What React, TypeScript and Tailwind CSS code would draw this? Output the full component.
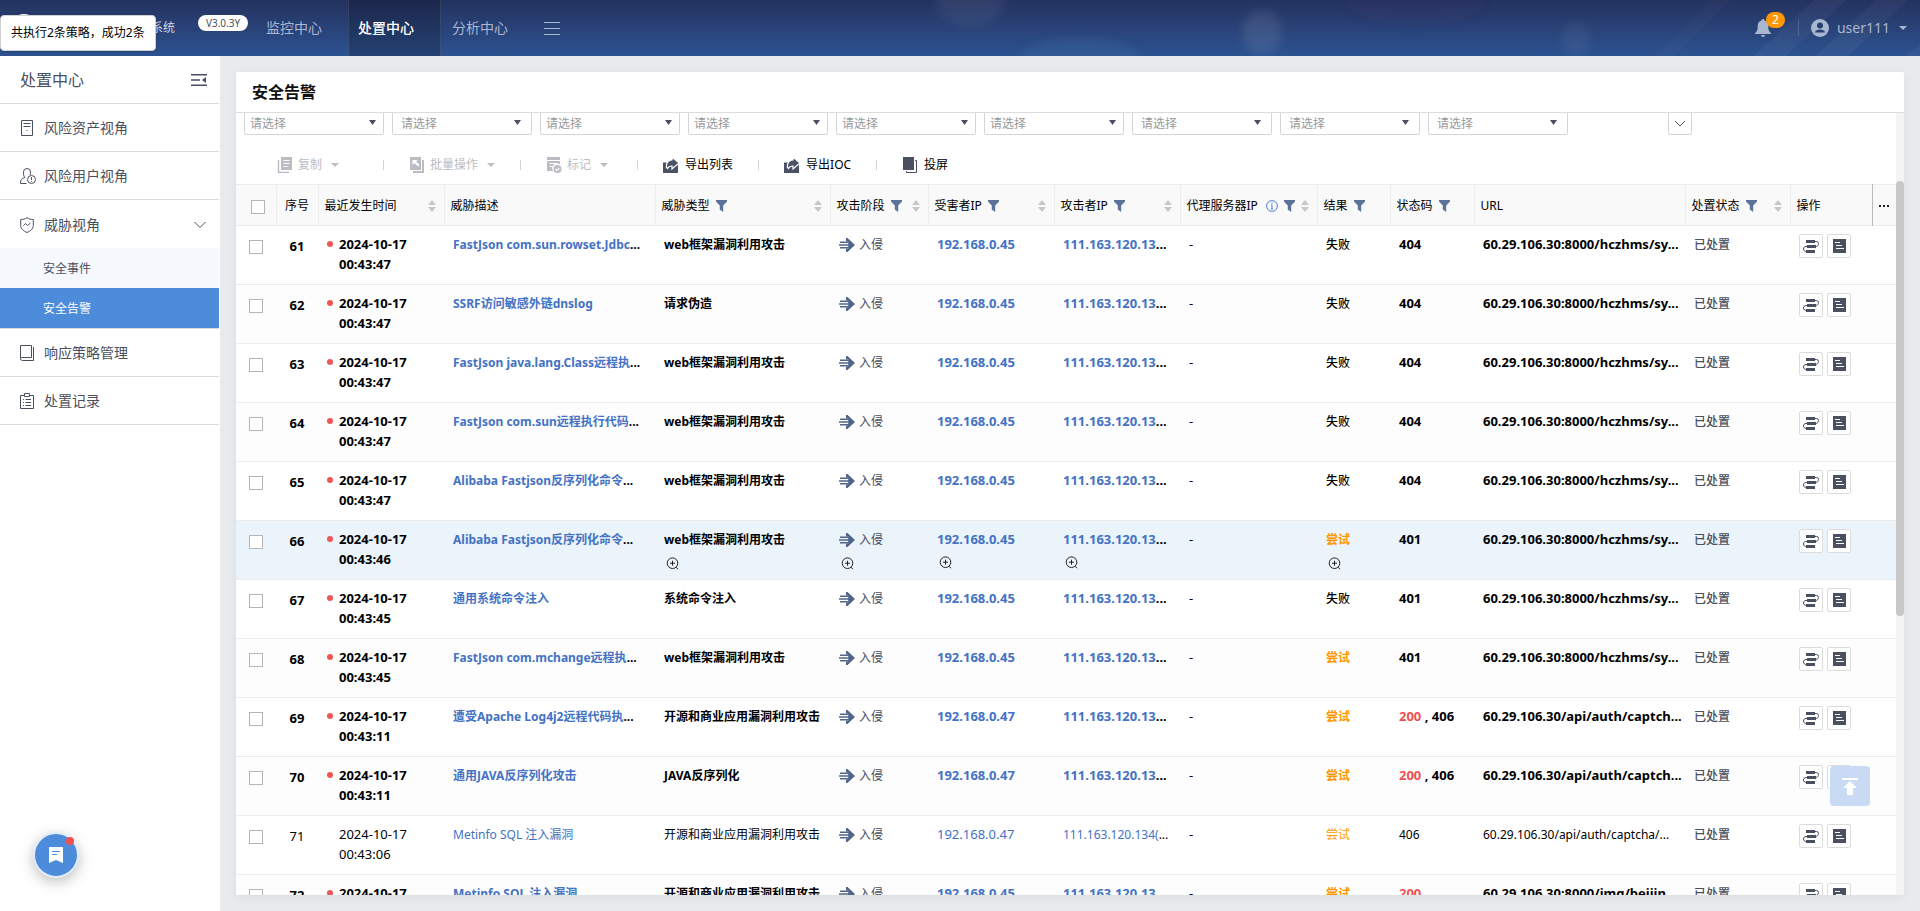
import type { ReactNode } from 'react';

type Part = [text: string, className?: string];

interface Alert {
  id: number;
  time: string;
  read?: boolean;
  hover?: boolean;
  threat: string;
  cut?: boolean;
  type: string;
  victim: string;
  attacker: string;
  result: '失败' | '尝试';
  codes: Part[];
  url: string;
}

const WEB = 'web框架漏洞利用攻击';
const OSS = '开源和商业应用漏洞利用攻击';
const HMS = '60.29.106.30:8000/hczhms/sy...';
const CAPTCHA = '60.29.106.30/api/auth/captch...';

const alerts: Alert[] = [
  { id: 61, time: '00:43:47', threat: 'FastJson com.sun.rowset.Jdbc', cut: true, type: WEB, victim: '192.168.0.45', attacker: '111.163.120.13', result: '失败', codes: [['404']], url: HMS },
  { id: 62, time: '00:43:47', threat: 'SSRF访问敏感外链dnslog', type: '请求伪造', victim: '192.168.0.45', attacker: '111.163.120.13', result: '失败', codes: [['404']], url: HMS },
  { id: 63, time: '00:43:47', threat: 'FastJson java.lang.Class远程执', cut: true, type: WEB, victim: '192.168.0.45', attacker: '111.163.120.13', result: '失败', codes: [['404']], url: HMS },
  { id: 64, time: '00:43:47', threat: 'FastJson com.sun远程执行代码', cut: true, type: WEB, victim: '192.168.0.45', attacker: '111.163.120.13', result: '失败', codes: [['404']], url: HMS },
  { id: 65, time: '00:43:47', threat: 'Alibaba Fastjson反序列化命令', cut: true, type: WEB, victim: '192.168.0.45', attacker: '111.163.120.13', result: '失败', codes: [['404']], url: HMS },
  { id: 66, time: '00:43:46', hover: true, threat: 'Alibaba Fastjson反序列化命令', cut: true, type: WEB, victim: '192.168.0.45', attacker: '111.163.120.13', result: '尝试', codes: [['401']], url: HMS },
  { id: 67, time: '00:43:45', threat: '通用系统命令注入', type: '系统命令注入', victim: '192.168.0.45', attacker: '111.163.120.13', result: '失败', codes: [['401']], url: HMS },
  { id: 68, time: '00:43:45', threat: 'FastJson com.mchange远程执', cut: true, type: WEB, victim: '192.168.0.45', attacker: '111.163.120.13', result: '尝试', codes: [['401']], url: HMS },
  { id: 69, time: '00:43:11', threat: '遭受Apache Log4j2远程代码执', cut: true, type: OSS, victim: '192.168.0.47', attacker: '111.163.120.13', result: '尝试', codes: [['200', 'text-[#f05050]'], [' , 406']], url: CAPTCHA },
  { id: 70, time: '00:43:11', threat: '通用JAVA反序列化攻击', type: 'JAVA反序列化', victim: '192.168.0.47', attacker: '111.163.120.13', result: '尝试', codes: [['200', 'text-[#f05050]'], [' , 406']], url: CAPTCHA },
  { id: 71, time: '00:43:06', read: true, threat: 'Metinfo SQL 注入漏洞', type: OSS, victim: '192.168.0.47', attacker: '111.163.120.134(', result: '尝试', codes: [['406']], url: '60.29.106.30/api/auth/captcha/...' },
  { id: 72, time: '00:43:06', threat: 'Metinfo SQL 注入漏洞', type: OSS, victim: '192.168.0.45', attacker: '111.163.120.13', result: '尝试', codes: [['200', 'text-[#f05050]']], url: '60.29.106.30:8000/img/beijin...' },
];

const Caret = ({ className }: { className: string }) => (
  <svg viewBox="0 0 8 4" className={`h-1 w-2 shrink-0 ${className}`} fill="currentColor">
    <path d="M0 0h8L4 4z" />
  </svg>
);

const Funnel = () => (
  <svg viewBox="0 0 11 12" className="h-3 w-[11px] shrink-0 text-[#5b7399]" fill="currentColor">
    <path d="M0 0h11v1.6L7.2 5.6V12L3.8 9.6v-4L0 1.6z" />
  </svg>
);

const Sorter = () => (
  <svg viewBox="0 0 8 12" className="ml-auto h-3 w-2 shrink-0 text-[#c8c8c8]" fill="currentColor">
    <path d="M4 0l4 5H0zM0 7h8l-4 5z" />
  </svg>
);

const Info = () => (
  <svg viewBox="0 0 12 12" className="ml-[2px] h-3 w-3 shrink-0 text-[#4a80d8]" fill="none" stroke="currentColor">
    <circle cx="6" cy="6" r="5.4" />
    <path d="M6 5v4M5 9h2M5.2 5H6M6 2.6v1.2" />
  </svg>
);

const Magnify = () => (
  <svg viewBox="0 0 13 13" className="h-[13px] w-[13px] text-[#222]" fill="none" stroke="currentColor">
    <circle cx="6.5" cy="6.2" r="5.3" />
    <path d="M4 6.2h5M6.5 3.7v5M10 10.2l2 2" />
  </svg>
);

const StageIcon = () => (
  <svg viewBox="0 0 16 14" className="h-[14px] w-4 shrink-0 text-[#50658a]" fill="currentColor">
    <path d="M7 0h1.5L16 7l-7.5 7H7v-3.500h2.500V3.500H7z" />
    <path d="M1 3.500h9V5H1zM0 6.300h12v1.400H0zM1 9h9v1.500H1z" />
    <path d="M9.500 4h2l2 3-2 3h-2z" />
  </svg>
);

const iconClass = 'h-4 w-4 shrink-0';

const CopyIcon = () => (
  <svg viewBox="0 0 16 16" className={iconClass} fill="currentColor">
    <path d="M4 0h11v13H4z" />
    <path d="M1.500 3v12.500H12" fill="none" stroke="currentColor" strokeWidth="1.400" />
    <path d="M6.500 3.500h6M6.500 6.500h6M6.500 9.500h4" stroke="#fff" strokeWidth="1.200" />
  </svg>
);

const BatchIcon = () => (
  <svg viewBox="0 0 16 16" className={iconClass} fill="currentColor">
    <path d="M1 0h11v13H1z" />
    <path d="M14 3v12H4" fill="none" stroke="currentColor" strokeWidth="2" />
    <path d="M3.500 3h5L7.200 4.500 10.500 8 9 9.500 5.500 6 3.500 8z" fill="#fff" />
  </svg>
);

const MarkIcon = () => (
  <svg viewBox="0 0 16 16" className={iconClass} fill="currentColor">
    <path d="M1 0h13v7.200A5 5 0 0 0 7 14H1z" />
    <path d="M1 3.500h13M3.500 6.500h7M3.500 9.500h3" stroke="#fff" strokeWidth="1.200" />
    <circle cx="11.500" cy="12" r="4" />
    <path d="M9.600 12l1.400 1.400 2.400-2.600" fill="none" stroke="#fff" strokeWidth="1.100" />
  </svg>
);

const ExportIcon = () => (
  <svg viewBox="0 0 16 16" className={`${iconClass} text-[#4a5366]`} fill="currentColor">
    <path d="M0 5.500h15V16H0z" />
    <path d="M3.500 10.500C3 6 5 3 9 2.800V0l7 6-7 6V9C7 9 5.500 9.500 4.500 11.500z" stroke="#fff" strokeWidth="1.200" />
    <path d="M13 0h3v4.500zM0 0h6L3 4H0z" fill="#fff" />
  </svg>
);

const ScreenIcon = () => (
  <svg viewBox="0 0 16 16" className={`${iconClass} text-[#4a5060]`} fill="currentColor">
    <path d="M1 0h11v13H1z" />
    <path d="M13 3.500h1.500v12H4.500V14" fill="none" stroke="currentColor" />
  </svg>
);

const FlowIcon = () => (
  <svg viewBox="0 0 16 13" className="h-[13px] w-4" fill="currentColor">
    <path d="M3 0h9v3H3zM4 5h9v3H4zM3 10h9v3H3z" />
    <path d="M12 1.500h1.500a2 2 0 0 1 2 2c0 1.500-1 3-3 3M4 6.500H3c-1.500 0-2.500 1-2.500 2.500s1 2.500 3 2.500" fill="none" stroke="currentColor" />
  </svg>
);

const DetailIcon = () => (
  <svg viewBox="0 0 13 14" className="h-[14px] w-[13px]" fill="currentColor">
    <path d="M0 0h13v14H0z" />
    <path d="M2 3.500h5M3 6.500h6M3 9.500h8" stroke="#fff" />
  </svg>
);

const sideIcon = 'h-4 w-[14px] shrink-0';

const AssetIcon = () => (
  <svg viewBox="0 0 14 16" className={sideIcon} fill="none" stroke="currentColor">
    <path d="M1.500.5h11v15h-11zM3.500 3.500h7M3.500 6.500h7M6.500 10.500h1" />
  </svg>
);

const UserRiskIcon = () => (
  <svg viewBox="0 0 16 16" className="-mr-[2px] h-4 w-4 shrink-0" fill="none" stroke="currentColor">
    <path d="M6.500 15.500h-6c0-4 1.500-5 4.500-6C3.500 8 3.500 6.500 3.500 4a3.500 3.500 0 0 1 7 0c0 1 0 2-.5 3" />
    <circle cx="11.500" cy="11.500" r="4" />
    <path d="M11.500 9v3M11.500 13v1" />
  </svg>
);

const ShieldIcon = () => (
  <svg viewBox="0 0 14 16" className={sideIcon} fill="none" stroke="currentColor">
    <path d="M7 .7c2 1.300 4 1.800 6.300 1.800v6c0 3.500-3 5.500-6.300 7C3.700 14 .7 12 .7 8.500v-6C3 2.500 5 2 7 .7z" />
    <path d="M3.500 8.500l2-2L7.500 8.500l3-2.500" />
  </svg>
);

const BookIcon = () => (
  <svg viewBox="0 0 14 16" className={sideIcon} fill="none" stroke="currentColor">
    <path d="M11.500 12.500V.5h-11v13a2 2 0 0 0 2 2h11V2M.5 13.500a1 1 0 0 1 1-1h10" />
  </svg>
);

const RecordIcon = () => (
  <svg viewBox="0 0 14 16" className={sideIcon} fill="none" stroke="currentColor">
    <path d="M4 2.500H.5v13h13v-13H10M4.500.5h5v3h-5zM3 6.500h1M5.500 6.500h5.500M3 9.500h1M5.500 9.500h5.500M3 12.500h1M5.500 12.500h5.500" />
  </svg>
);

const Backdrop = () => (
  <svg className="absolute inset-0 h-full w-full" preserveAspectRatio="xMidYMid slice" viewBox="0 0 1920 56">
    <defs>
      <filter id="soft"><feGaussianBlur stdDeviation="5" /></filter>
    </defs>
    <g filter="url(#soft)">
      <ellipse cx="1262" cy="32" rx="20" ry="22" fill="#fff" opacity=".09" />
      <ellipse cx="1576" cy="38" rx="15" ry="16" fill="#fff" opacity=".05" />
      <ellipse cx="970" cy="0" rx="34" ry="26" fill="#fff" opacity=".06" />
      <ellipse cx="1080" cy="62" rx="60" ry="26" fill="#6fa0c0" opacity=".1" />
      <ellipse cx="1415" cy="0" rx="70" ry="26" fill="#4a2a60" opacity=".12" />
    </g>
    <path d="M1786 56l60-56h-32l-60 56zM1848 56l60-56h-32l-60 56zM1906 56l14-12v12z" fill="#fff" opacity=".04" />
    <path d="M1674 56l56-56h-18l-56 56z" fill="#fff" opacity=".02" />
  </svg>
);

const TopBar = () => (
  <header className="relative flex h-14 shrink-0 items-center bg-linear-to-b from-[#24325f] to-[#2c5391] text-sm text-[#a9b7d1]">
    <Backdrop />
    <div className="relative flex h-full w-[175px] shrink-0 items-center justify-between pl-[10px] text-xs text-[#cfd8e8]">
      <span className="h-7 w-7 rounded-full bg-white" />
      <span>系统</span>
    </div>
    <span className="relative mb-[10px] ml-[23px] flex h-4 w-[50px] items-center justify-center rounded-full bg-white text-[10px] text-[#4a5060]">V3.0.3Y</span>
    <nav className="relative flex h-full items-stretch">
      <a href="#monitor" className="mr-[26px] ml-[18px] flex items-center">监控中心</a>
      <a href="#dispose" className="flex w-[93px] items-center border-x border-white/10 bg-black/20 pl-[9px] font-medium text-white">处置中心</a>
      <a href="#analyse" className="ml-[11px] flex items-center">分析中心</a>
    </nav>
    <button aria-label="更多" className="relative ml-9">
      <svg viewBox="0 0 16 13" className="h-[13px] w-4" stroke="currentColor"><path d="M0 .5h16M0 6.500h16M0 12.500h16" /></svg>
    </button>
    <div className="relative ml-auto flex items-center pr-[13px]">
      <button aria-label="通知" className="relative mr-[27px]">
        <svg viewBox="0 0 16 18" className="h-[18px] w-4" fill="currentColor">
          <path d="M8 0c1 0 1.500.6 1.500 1.500C12 2.200 13.300 4.400 13.300 7c0 4 .7 5.500 2.700 7v1H0v-1c2-1.500 2.700-3 2.700-7 0-2.600 1.300-4.800 3.800-5.500C6.500.6 7 0 8 0zM6 16h4a2 2 0 0 1-4 0z" />
        </svg>
        <span className="absolute -top-[7px] left-[11px] flex h-4 w-[19px] items-center justify-center rounded-full bg-[#ff9800] text-xs text-white">2</span>
      </button>
      <span className="mr-3 h-4 w-px bg-white/15" />
      <button className="flex items-center">
        <svg viewBox="0 0 18 18" className="mr-2 h-[18px] w-[18px]" fill="currentColor">
          <circle cx="9" cy="9" r="9" />
          <circle cx="9" cy="6.500" r="3" fill="#27406f" />
          <path d="M3.800 13.500c.8-2.200 3-3 5.200-3s4.400.8 5.200 3z" fill="#27406f" />
        </svg>
        user111
        <Caret className="ml-[9px]" />
      </button>
    </div>
  </header>
);

const SideItem = ({ icon, label, arrow }: { icon: ReactNode; label: string; arrow?: boolean }) => (
  <a href="#menu" className={`flex h-12 items-center gap-[10px] pt-px pr-[13px] pl-5 text-sm ${arrow ? '' : 'border-b border-[#dcdcdc]'}`}>
    {icon}
    {label}
    {arrow && (
      <svg viewBox="0 0 12 8" className="ml-auto h-2 w-3" fill="none" stroke="currentColor"><path d="M.5 1L6 6.500 11.500 1" /></svg>
    )}
  </a>
);

const Sidebar = () => (
  <aside className="relative w-[220px] shrink-0 border-r border-white bg-white text-[#4a5060]">
    <div className="flex h-12 items-center justify-between border-b border-[#dcdcdc] pr-3 pl-5">
      <h2 className="text-base">处置中心</h2>
      <button aria-label="收起菜单">
        <svg viewBox="0 0 16 14" className="h-[14px] w-4" fill="currentColor">
          <path d="M0 1h16v1.400H0zM0 6.300h9v1.400H0zM0 11.600h16V13H0zM15 4v6l-4-3z" />
        </svg>
      </button>
    </div>
    <nav>
      <SideItem icon={<AssetIcon />} label="风险资产视角" />
      <SideItem icon={<UserRiskIcon />} label="风险用户视角" />
      <SideItem icon={<ShieldIcon />} label="威胁视角" arrow />
      <div className="border-b border-[#dcdcdc] text-xs">
        <a href="#events" className="flex h-10 items-center bg-[#f5f9fe] pt-[2px] pl-[43px]">安全事件</a>
        <a href="#alerts" className="flex h-10 items-center bg-[#4c8cda] pt-[2px] pl-[43px] text-white">安全告警</a>
      </div>
      <SideItem icon={<BookIcon />} label="响应策略管理" />
      <SideItem icon={<RecordIcon />} label="处置记录" />
    </nav>
    <button aria-label="书签" className="absolute bottom-[33px] left-[33px] flex h-[46px] w-[46px] items-center justify-center rounded-full border-2 border-[#e3edf9] bg-[#4c8cda] shadow-[0_4px_14px_rgba(0,0,0,0.25)]">
      <svg viewBox="0 0 14 16" className="h-4 w-[14px]">
        <path d="M0 0h14v16l-7-3-7 3z" fill="#fff" />
        <path d="M3 4.500h8M3 7.500h5" stroke="#4c8cda" />
      </svg>
      <span className="absolute top-[3px] right-[3px] h-2 w-2 rounded-full bg-[#f05050]" />
    </button>
  </aside>
);

// wide ones have the larger inner padding
const filters = [false, true, false, false, false, false, true, true, true];

const Filters = () => (
  <div className="-mt-0.5 flex gap-2 pl-2 text-xs text-[#999]">
    {filters.map((wide, i) => (
      <div key={i} className={`flex h-6 w-[140px] items-center rounded-xs border border-[#d5d5d5] pt-px ${wide ? 'pr-[10px] pl-2' : 'pr-[7px] pl-[5px]'}`}>
        <select aria-label={`筛选条件${i + 1}`} className="min-w-0 flex-1 appearance-none bg-transparent outline-none">
          <option>请选择</option>
        </select>
        <svg viewBox="0 0 7 5" className="mb-[3px] h-[5px] w-[7px] shrink-0 text-[#4a5060]" fill="currentColor"><path d="M0 0h7L3.500 5z" /></svg>
      </div>
    ))}
    <button aria-label="展开筛选" className="ml-[92px] flex h-6 w-6 items-center justify-center rounded-xs border border-[#d5d5d5]">
      <svg viewBox="0 0 12 7" className="h-[7px] w-3 text-[#555]" fill="none" stroke="currentColor"><path d="M1 1l5 5 5-5" /></svg>
    </button>
  </div>
);

const Separator = () => <span className="mx-[25px] h-[10px] w-px bg-[#d5d5d5]" />;

const Tool = ({ icon, label, menu }: { icon: ReactNode; label: string; menu?: boolean }) => (
  <button className={`flex items-center ${menu ? 'gap-[5px] text-[#bbbdc3]' : 'gap-[6px] text-black'}`}>
    {icon}
    {label}
    {menu && <Caret className="ml-1" />}
  </button>
);

const Toolbar = () => (
  <div className="flex h-[49px] items-center pt-[10px] pl-[41px] text-xs">
    <Tool icon={<CopyIcon />} label="复制" menu />
    <span className="w-[19px]" />
    <Separator />
    <Tool icon={<BatchIcon />} label="批量操作" menu />
    <Separator />
    <Tool icon={<MarkIcon />} label="标记" menu />
    <span className="w-1" />
    <Separator />
    <Tool icon={<ExportIcon />} label="导出列表" />
    <Separator />
    <Tool icon={<ExportIcon />} label="导出IOC" />
    <Separator />
    <Tool icon={<ScreenIcon />} label="投屏" />
  </div>
);

interface HeadProps {
  label: string;
  info?: boolean;
  filter?: boolean;
  sort?: boolean;
}

const heads: HeadProps[] = [
  { label: '最近发生时间', sort: true },
  { label: '威胁描述' },
  { label: '威胁类型', filter: true, sort: true },
  { label: '攻击阶段', filter: true, sort: true },
  { label: '受害者IP', filter: true, sort: true },
  { label: '攻击者IP', filter: true, sort: true },
  { label: '代理服务器IP', info: true, filter: true, sort: true },
  { label: '结果', filter: true },
  { label: '状态码', filter: true },
  { label: 'URL' },
  { label: '处置状态', filter: true, sort: true },
  { label: '操作' },
];

const Head = ({ label, info, filter, sort }: HeadProps) => (
  <th className="border-r border-[#ececec] pt-px pr-2 pl-[6px] font-normal nth-last-2:border-[#bbb]">
    <div className="flex items-center gap-[6px] whitespace-nowrap">
      {label}
      {info && <Info />}
      {filter && <Funnel />}
      {sort && <Sorter />}
    </div>
  </th>
);

const Check = ({ label }: { label: string }) => (
  <input type="checkbox" aria-label={label} className="block h-[14px] w-[14px] appearance-none border border-[#b5b5b5] bg-white" />
);

const Cell = ({ zoom, className = 'pt-[9px]', children }: { zoom?: boolean; className?: string; children: ReactNode }) => (
  <td className={`pl-[9px] ${className}`}>
    <div className="h-5">{children}</div>
    {zoom && <div className="pt-[7px] pl-[2px]"><Magnify /></div>}
  </td>
);

const opButton = 'flex h-6 w-6 items-center justify-center rounded-xs border border-[#dcdcdc] bg-white text-[#4a5060]';

const Row = ({ a }: { a: Alert }) => (
  <tr className={`h-[59px] border-b border-[#ececec] align-top whitespace-nowrap ${a.hover ? 'bg-[#ebf3fb]' : 'odd:bg-white even:bg-[#fdfdfd]'} ${a.read ? '' : 'font-bold'}`}>
    <td className="pt-[14px] pl-[13px]"><Check label={`选择 ${a.id}`} /></td>
    <td className="pt-[10px] text-center text-[13px]">{a.id}</td>
    <td className="pt-2 pl-[9px] text-[13px]">
      <div className="flex gap-[6px]">
        <span className={`mt-[7px] h-[6px] w-[6px] rounded-full ${a.read ? '' : 'bg-[#f05656]'}`} />
        <span>2024-10-17<br />{a.time}</span>
      </div>
    </td>
    <Cell>
      <a href="#detail" className="text-[#4472c4]">{a.threat}</a>
      {a.cut && '...'}
    </Cell>
    <Cell zoom={a.hover}>{a.type}</Cell>
    <Cell zoom={a.hover} className="pt-[9px] font-normal text-[#4a5060]">
      <span className="flex items-center gap-1"><StageIcon />入侵</span>
    </Cell>
    <Cell zoom={a.hover} className="pt-2 text-[13px]"><a href="#victim" className="text-[#4472c4]">{a.victim}</a></Cell>
    <Cell zoom={a.hover} className={a.read ? 'pt-[9px]' : 'pt-2 text-[13px]'}><a href="#attacker" className="text-[#4472c4]">{a.attacker}</a>...</Cell>
    <Cell className="pt-2 text-[13px] font-normal">-</Cell>
    <Cell zoom={a.hover} className={a.result === '尝试' ? 'pt-[9px] text-[#ff9800]' : 'pt-[9px] font-medium'}>{a.result}</Cell>
    <Cell className={a.read ? 'pt-[9px]' : 'pt-2 text-[13px]'}>{a.codes.map(([text, color]) => <span key={text} className={color}>{text}</span>)}</Cell>
    <Cell className={a.read ? 'pt-[9px]' : 'pt-2 text-[13px]'}>{a.url}</Cell>
    <Cell className="pt-[9px] font-medium text-[#4a5060]">已处置</Cell>
    <td className="pt-2 pl-[9px]">
      <div className="flex gap-1">
        <button aria-label="处置流程" className={opButton}><FlowIcon /></button>
        <button aria-label="详情" className={opButton}><DetailIcon /></button>
      </div>
    </td>
    <td />
  </tr>
);

const AlertTable = () => (
  <table className="w-full table-fixed border-collapse text-left text-xs leading-5 text-black">
    <colgroup>
      <col className="w-[40px]" />
      <col className="w-[42px]" />
      <col className="w-[126px]" />
      <col className="w-[211px]" />
      <col className="w-[175px]" />
      <col className="w-[98px]" />
      <col className="w-[126px]" />
      <col className="w-[126px]" />
      <col className="w-[137px]" />
      <col className="w-[73px]" />
      <col className="w-[84px]" />
      <col className="w-[211px]" />
      <col className="w-[105px]" />
      <col className="w-[82px]" />
      <col className="w-[24px]" />
    </colgroup>
    <thead>
      <tr className="h-[41px] border-y border-[#ececec] bg-[#f9f9f9]">
        <th className="border-r border-[#ececec] pt-1 pl-[15px]"><Check label="全选" /></th>
        <th className="border-r border-[#ececec] pt-px text-center font-normal">序号</th>
        {heads.map((h) => <Head key={h.label} {...h} />)}
        <th className="text-center">
          <button aria-label="列设置" className="inline-flex gap-[2px] align-middle">
            <i className="h-[2px] w-[2px] bg-[#222]" />
            <i className="h-[2px] w-[2px] bg-[#222]" />
            <i className="h-[2px] w-[2px] bg-[#222]" />
          </button>
        </th>
      </tr>
    </thead>
    <tbody>
      {alerts.map((a) => <Row key={a.id} a={a} />)}
    </tbody>
  </table>
);

const Scrollbar = () => (
  <div className="flex w-2 shrink-0 flex-col bg-[#f4f4f4]">
    <span className="flex-[68]" />
    <span className="flex-[435] rounded-full bg-[#c8c8c8]" />
    <span className="flex-[279]" />
  </div>
);

export default function App() {
  return (
    <div className="relative flex h-screen flex-col overflow-hidden bg-[#e8ebee] font-['Noto_Sans','Noto_Sans_CJK_SC',sans-serif]">
      <TopBar />
      <div className="flex min-h-0 flex-1">
        <Sidebar />
        <main className="flex min-w-0 flex-1 p-4">
          <section className="relative flex min-w-0 flex-1 flex-col overflow-hidden rounded-t-xs bg-white shadow-[0_2px_10px_rgba(0,0,0,0.06)]">
            <h1 className="flex h-[41px] shrink-0 items-center border-b border-[#dcdcdc] pl-4 text-base font-bold text-[#111]">安全告警</h1>
            <div className="flex min-h-0 flex-1">
              <div className="min-w-0 flex-1 overflow-hidden">
                <Filters />
                <Toolbar />
                <AlertTable />
              </div>
              <Scrollbar />
            </div>
            <button aria-label="回到顶部" className="absolute right-[34px] bottom-[89px] flex h-10 w-10 items-center justify-center rounded bg-[#c9dbf4]">
              <svg viewBox="0 0 16 17" className="h-[17px] w-4" fill="#fff">
                <path d="M0 0h16v2H0zM8 3l7 7h-4v7H5v-7H1z" />
              </svg>
            </button>
          </section>
        </main>
      </div>
      <div role="status" className="absolute top-[15px] left-0 flex h-9 w-[156px] items-center rounded border border-[#d0d0d0] bg-white pl-[10px] text-xs text-black shadow-sm">
        共执行2条策略，成功2条
      </div>
    </div>
  );
}
